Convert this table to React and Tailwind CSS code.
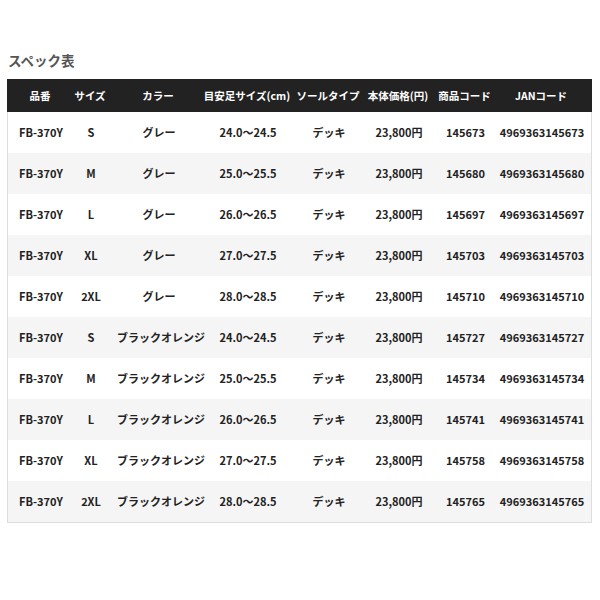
import React from "react";

const rows = [
  ["S", "グレー", "24.0～24.5", "145673"],
  ["M", "グレー", "25.0～25.5", "145680"],
  ["L", "グレー", "26.0～26.5", "145697"],
  ["XL", "グレー", "27.0～27.5", "145703"],
  ["2XL", "グレー", "28.0～28.5", "145710"],
  ["S", "ブラックオレンジ", "24.0～24.5", "145727"],
  ["M", "ブラックオレンジ", "25.0～25.5", "145734"],
  ["L", "ブラックオレンジ", "26.0～26.5", "145741"],
  ["XL", "ブラックオレンジ", "27.0～27.5", "145758"],
  ["2XL", "ブラックオレンジ", "28.0～28.5", "145765"],
];

const cols = "grid grid-cols-[62px_42px_89px_94px_68px_72px_61px_97px]";

export default function App() {
  return (
    <div
      className="w-[600px] h-[600px] bg-white pt-[50px] px-[7px]"
      style={{ fontFamily: '"Noto Sans CJK JP", "Noto Sans", sans-serif' }}
    >
      <h2 className="text-[13.5px] font-bold text-[#555] leading-[20px] pl-[1px] mb-[9px]">
        スペック表
      </h2>
      <div className="w-[585px] text-[11px] font-bold">
        <div className={`${cols} h-[33px] items-center bg-[#222] text-white text-[10.5px] whitespace-nowrap`}>
          <div className="text-center pl-[4px]">品番</div>
          <div className="text-center">サイズ</div>
          <div className="text-center pl-[5px]">カラー</div>
          <div className="text-center">目安足サイズ(cm)</div>
          <div className="text-center">ソールタイプ</div>
          <div className="text-center">本体価格(円)</div>
          <div className="text-center">商品コード</div>
          <div className="text-center pr-[5px]">JANコード</div>
        </div>
        <div className="border-x border-b border-[#ddd] text-[#222]">
          {rows.map((r, i) => (
            <div
              key={i}
              className={`${cols} h-[41px] items-center whitespace-nowrap ${i % 2 === 1 ? "bg-[#f5f5f5]" : "bg-white"}`}
            >
              <div className="text-center pl-[4px]">FB-370Y</div>
              <div className="text-center">{r[0]}</div>
              <div className="text-center pl-[5px]">{r[1]}</div>
              <div className="text-center">{r[2]}</div>
              <div className="text-center">デッキ</div>
              <div className="text-center">23,800円</div>
              <div className="text-center">{r[3]}</div>
              <div className="text-center pr-[5px]">4969363{r[3]}</div>
            </div>
          ))}
        </div>
      </div>
    </div>
  );
}
